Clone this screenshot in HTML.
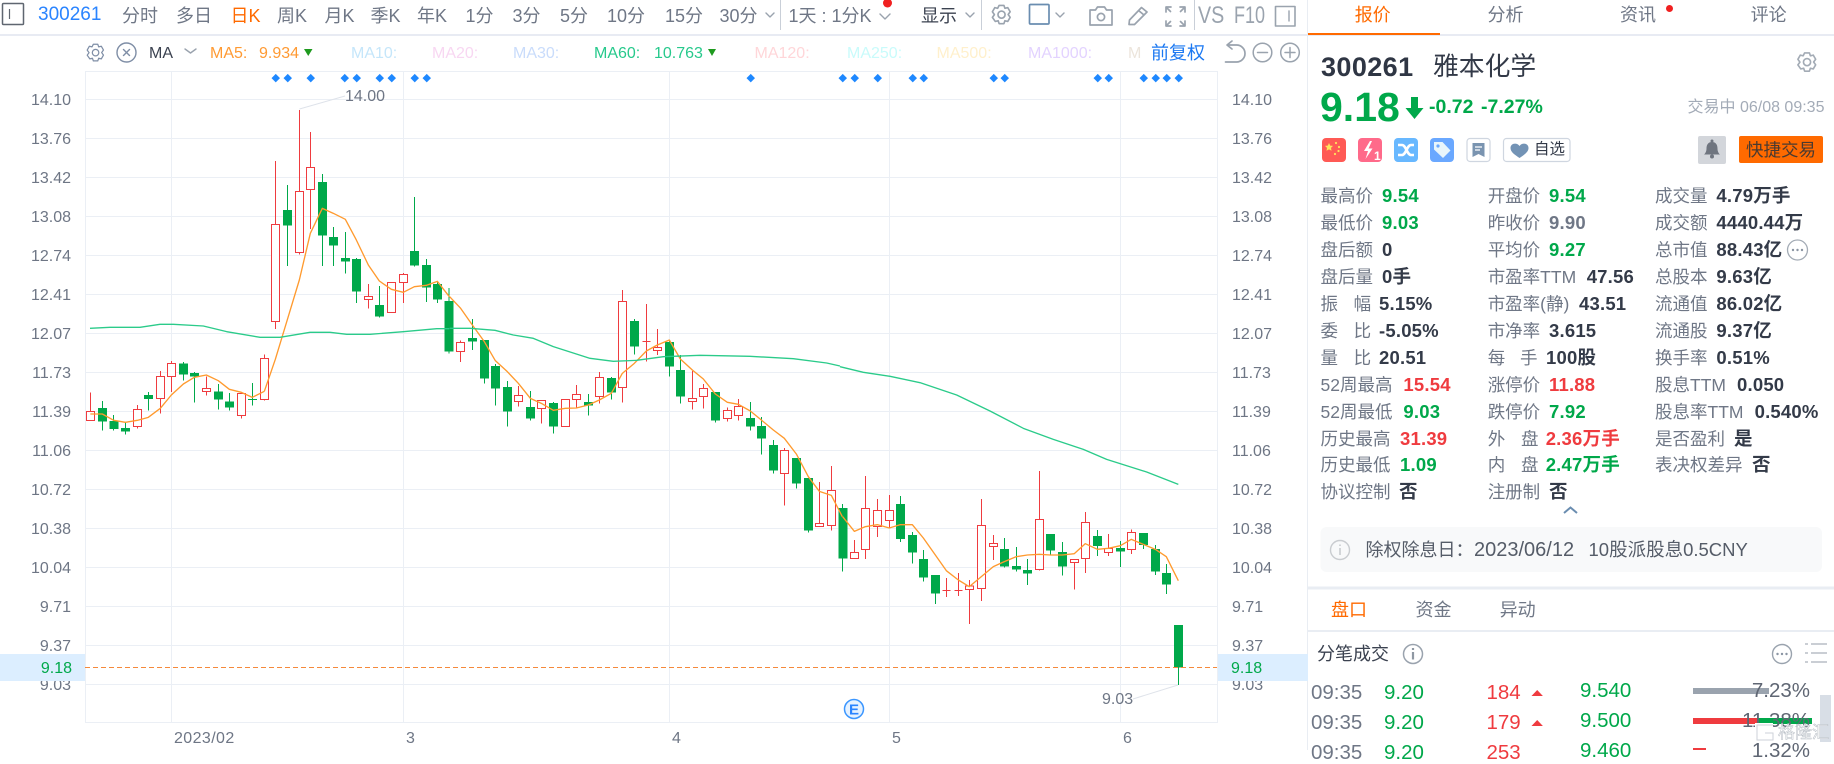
<!DOCTYPE html>
<html lang="zh"><head><meta charset="utf-8"><title>300261</title>
<style>
html,body{margin:0;padding:0;background:#fff}
body{width:1834px;height:750px;overflow:hidden;position:relative;font-family:"Liberation Sans","Noto Sans CJK SC",sans-serif;color:#6f7786}
.a{position:absolute;white-space:nowrap;line-height:20px;height:20px}
.nav{font-size:18px;top:6px;color:#6f7786}
.ma{font-size:16px;top:44px}
.yl{font-size:16px;color:#6e7685;width:71px;left:0;text-align:right;margin-top:1.5px}
.yr{font-size:16px;color:#6e7685;left:1232px;margin-top:1.5px}
.x{font-size:16px;color:#6e7685;top:729px}
.tab{font-size:18px;top:5px}
.r{position:absolute;left:0;width:1834px;height:20px}
.r span{position:absolute;white-space:nowrap;line-height:20px;font-size:17.5px;color:#6f7786}
.r b{position:absolute;white-space:nowrap;line-height:20px;font-size:18.5px;font-weight:700;color:#333a48;letter-spacing:.2px}
.r b.g{color:#00a84a}.r b.d{color:#ef3b3f}.r b.m{color:#6f7786}
.dm{position:absolute;top:75px;width:5.5px;height:5.5px;background:#1e88ff;transform:rotate(45deg)}
.t{font-size:20.5px}
.badge{position:absolute;top:138px;width:24px;height:24px;border-radius:4px}
svg{position:absolute;overflow:visible}
</style></head><body>

<svg style="left:0;top:0" width="1834" height="750" viewBox="0 0 1834 750">
<g shape-rendering="crispEdges" stroke="#ebeff5" stroke-width="1" fill="none">
<path d="M85 71.5H1217M85 99.5H1217M85 138.5H1217M85 177.5H1217M85 216.5H1217M85 255.5H1217M85 294.5H1217M85 333.5H1217M85 372.5H1217M85 411.5H1217M85 450.5H1217M85 489.5H1217M85 528.5H1217M85 567.5H1217M85 606.5H1217M85 645.5H1217M85 684.5H1217M85 722.5H1217"/>
<path d="M85.5 71V723M171.5 71V723M403.5 71V723M669.5 71V723M889.5 71V723M1120.5 71V723M1217.5 71V723"/>
<path stroke="#e8ebf3" stroke-width="2" d="M0 35H1834"/>
<path stroke="#e9edf3" d="M1307.5 0V750"/>
</g>
<path d="M299.5 109L345 96M1133 699L1178 685" stroke="#dfe3ea" fill="none"/>

<g transform="translate(60,340) scale(.33333)" shape-rendering="crispEdges">
<path stroke="#ef3b3f" stroke-width="3" fill="none" d="M91 158V242M232 195V266M301 93V221M334 63V156M439 110V167M544 158V236M613 43V182"/>
<path stroke="#ef3b3f" stroke-width="3" fill="#fff" d="M79 214h24v28h-24zM220 208h24v52h-24zM289 109h24v67h-24zM322 70h24v40h-24zM427 145h24v10h-24zM532 160h24v67h-24zM601 55h24v124h-24z"/>
<path stroke="#00a84a" stroke-width="3" fill="none" d="M127 183V272M161 225V272M196 248V284M265 156V212M370 66V122M403 96V188M475 132V209M508 159V212M577 129V197"/>
<path fill="#00a84a" d="M114 204h27v41h-27zM148 243h27v24h-27zM183 264h27v11h-27zM252 165h27v12h-27zM357 70h27v34h-27zM390 99h27v11h-27zM462 154h27v25h-27zM495 184h27v19h-27zM564 177h27v3h-27z"/>
</g>
<g transform="translate(60,90) scale(.33333)" shape-rendering="crispEdges">
<path stroke="#ef3b3f" stroke-width="3" fill="none" d="M646 213V717M718 60V494M751 126V417M925 582V656M994 577V667M1030 549V639"/>
<path stroke="#ef3b3f" stroke-width="3" fill="#fff" d="M634 403h24v291h-24zM706 304h24v184h-24zM739 232h24v66h-24zM913 619h24v9h-24zM982 577h24v90h-24zM1018 553h24v24h-24z"/>
<path stroke="#00a84a" stroke-width="3" fill="none" d="M682 285V528M787 252V528M820 411V528M856 426V551M889 504V639M958 588V683M1063 321V530M1099 507V636M1132 573V639"/>
<path fill="#00a84a" d="M669 360h27v47h-27zM774 276h27v161h-27zM807 441h27v26h-27zM843 504h27v11h-27zM876 507h27v98h-27zM945 645h27v35h-27zM1050 483h27v44h-27zM1086 525h27v68h-27zM1119 582h27v47h-27z"/>
</g>
<g transform="translate(450,270) scale(.33333)" shape-rendering="crispEdges">
<path stroke="#ef3b3f" stroke-width="3" fill="none" d="M31 211V276M205 348V410M274 391V461M346 388V469M379 345V414M448 306V401M517 60V398M589 102V275M622 177V255M727 303V419M760 342V416M832 412V455M865 387V452M1003 534V707M1108 636V769M1144 588V782M577 214H602"/>
<path stroke="#ef3b3f" stroke-width="3" fill="#fff" d="M19 217h24v28h-24zM193 376h24v19h-24zM262 391h24v24h-24zM334 388h24v81h-24zM367 373h24v15h-24zM436 322h24v57h-24zM505 94h24v258h-24zM610 232h24v9h-24zM715 385h24v9h-24zM748 355h24v24h-24zM820 421h24v24h-24zM853 409h24v27h-24zM991 541h24v69h-24zM1096 760h24v9h-24zM1132 661h24v105h-24z"/>
<path stroke="#00a84a" stroke-width="3" fill="none" d="M-3 54V251M67 147V240M103 210V341M136 282V407M172 333V470M241 363V452M310 396V491M415 372V437M484 321V389M553 147V254M658 210V320M691 255V401M796 366V458M901 396V482M934 441V554M970 510V611M1039 564V656M1075 624V788"/>
<path fill="#00a84a" d="M-16 93h27v152h-27zM54 204h27v11h-27zM90 210h27v116h-27zM123 288h27v68h-27zM159 351h27v74h-27zM228 411h27v35h-27zM297 399h27v71h-27zM402 396h27v11h-27zM471 324h27v44h-27zM540 153h27v77h-27zM645 216h27v74h-27zM678 300h27v80h-27zM783 366h27v86h-27zM888 444h27v26h-27zM921 468h27v38h-27zM957 525h27v77h-27zM1026 564h27v77h-27zM1062 624h27v158h-27z"/>
</g>
<g transform="translate(840,450) scale(.33333)" shape-rendering="crispEdges">
<path stroke="#ef3b3f" stroke-width="3" fill="none" d="M43 270V325M76 78V327M112 147V261M148 135V232M388 390V522M424 147V453M460 255V330M598 63V362M703 328V419M736 186V369M805 252V318M874 238V312M319 384V441M355 369V438M307 422H332M343 422H368"/>
<path stroke="#ef3b3f" stroke-width="3" fill="#fff" d="M31 307h24v18h-24zM64 175h24v123h-24zM100 181h24v48h-24zM136 181h24v30h-24zM376 408h24v10h-24zM412 226h24v189h-24zM448 280h24v9h-24zM586 208h24v150h-24zM691 328h24v10h-24zM724 217h24v108h-24zM793 295h24v12h-24zM862 247h24v51h-24z"/>
<path stroke="#00a84a" stroke-width="3" fill="none" d="M8 162V365M181 138V276M217 246V341M250 300V395M286 375V462M493 264V353M529 291V365M562 327V405M631 252V315M667 276V377M772 240V318M841 273V351M910 249V297M946 285V375M979 342V432M1015 525V705"/>
<path fill="#00a84a" d="M-5 174h27v152h-27zM168 162h27v105h-27zM204 255h27v53h-27zM237 327h27v56h-27zM273 375h27v56h-27zM480 297h27v53h-27zM516 348h27v11h-27zM549 360h27v11h-27zM618 252h27v50h-27zM654 306h27v44h-27zM759 258h27v30h-27zM828 294h27v11h-27zM897 249h27v36h-27zM933 297h27v68h-27zM966 369h27v35h-27zM1002 525h27v127h-27z"/>
</g>

<g fill="none" stroke-width="4" stroke-linejoin="round" stroke="#ff9a2e">
<polyline transform="translate(60,340) scale(.33333)" points="91,222 127,222 161,241 196,247 232,241 265,232 301,205 334,165 370,132 403,112 439,105 475,122 508,148 544,157 577,172 613,154"/>
<polyline transform="translate(60,90) scale(.33333)" points="613,904 646,808 682,689 718,570 751,430 787,355 820,370 856,388 889,450 925,525 958,573 994,598 1030,607 1063,590 1099,586 1132,574 1168,620"/>
<polyline transform="translate(450,270) scale(.33333)" points="-1,80 32,115 67,165 103,215 136,272 172,305 205,340 241,385 274,400 310,421 346,415 379,414 415,405 448,390 484,370 517,310 553,280 589,243 622,225 658,210 691,267 727,300 760,327 796,372 832,397 865,403 901,423 934,450 970,480 1003,505 1039,552 1075,620 1108,664 1144,676 1177,740"/>
<polyline transform="translate(840,450) scale(.33333)" points="8,200 43,244 76,230 112,224 148,234 181,224 217,224 250,264 286,315 319,362 355,390 388,410 424,380 460,350 493,335 529,320 562,315 598,313 631,315 667,315 703,311 736,281 772,298 805,295 841,287 874,268 910,283 946,298 979,320 1015,392"/>
</g>
<g fill="none" stroke-width="4" stroke-linejoin="round" stroke="#2bcb8a">
<polyline transform="translate(60,90) scale(.33333)" points="90,715 150,712 240,712 300,703 340,703 430,708 500,725 600,742 660,742 750,727 810,727 860,733 930,733 1030,725 1130,716 1168,716"/>
<polyline transform="translate(450,270) scale(.33333)" points="-1,175 60,175 135,181 190,195 250,205 310,230 420,265 490,274 560,271 640,260 750,256 900,259 1030,266 1130,279 1170,288"/>
<polyline transform="translate(840,360) scale(.33333)" points="0,20 70,37 150,49 240,68 350,105 450,153 550,205 640,238 730,268 800,298 920,336 1015,373"/>
</g>
<path d="M85 667.5H1217" stroke="#f5893b" stroke-width="1" stroke-dasharray="5 3" fill="none" shape-rendering="crispEdges"/>

<!-- toolbar icons -->
<rect x="2.5" y="3.5" width="21" height="21" fill="none" stroke="#5f6670" stroke-width="1.5" rx="1"/><path d="M9.5 9v10" stroke="#5f6670" stroke-width="1.2"/>
<g fill="none" stroke="#9aa3ae" stroke-width="1.4" stroke-linecap="round" stroke-linejoin="round">
<path d="M766 13l4 4 4-4M880 14l5 5 5-5M966 13l4 4 4-4M1056 13l4 4 4-4M185 49l5.500 4 5.500-4"/>
<g transform="translate(990,3) scale(.96)"><path stroke-width="1.7" d="M9.500 2.500h5l1 3 3-.7 2.500 4.300-2.100 2.900 2.100 2.900-2.500 4.300-3-.7-1 3h-5l-1-3-3 .7L2.500 15l2.100-2.900L2.500 9.200 5 4.800l3 .7z"/><circle cx="12" cy="12.100" r="3.700" stroke-width="1.700"/></g>
<rect x="1029.500" y="4.500" width="19.500" height="19.500" rx="1" stroke="#6a8db0" stroke-width="1.700"/>
<path stroke-width="1.700" d="M1090 10h5.500l2-3h7l2 3h5.500v15h-22z"/><circle cx="1101" cy="17" r="3.600" stroke-width="1.700"/>
<path stroke-width="1.700" d="M1129.500 20l12-12.500 5.500 4.500-12.500 12.500-5.500 0zM1138.500 10.500l5.500 4.500"/>
<path stroke-width="1.700" d="M1166 12V7h5M1180 7h5v5M1185 21v5h-5M1171 26h-5v-5M1166.500 7.500l4 4M1184.500 7.500l-4 4M1184.500 25.500l-4-4M1166.500 25.500l4-4"/>
<rect x="1275.500" y="6.500" width="19.500" height="19.500" stroke-width="1.600"/><path d="M1289 11v10"/>
<path stroke="#c9cfd8" stroke-linecap="butt" stroke-width="1" d="M780.500 0v30M981.500 0v30M1194.500 0v30"/>
<!-- ma row -->
<g transform="translate(85,42) scale(.88)"><path stroke="#7f8ea6" d="M9.500 2.500h5l1 3 3-.7 2.500 4.300-2.100 2.900 2.100 2.900-2.500 4.300-3-.7-1 3h-5l-1-3-3 .7L2.500 15l2.100-2.900L2.500 9.200 5 4.800l3 .7z"/><circle cx="12" cy="12.100" r="3.700" stroke="#7f8ea6"/></g>
<circle cx="126.500" cy="52.500" r="9.500" stroke="#7f8ea6"/><path stroke="#7f8ea6" d="M123.500 49.500l6 6M129.500 49.500l-6 6"/>
<path stroke="#9aa3ae" stroke-width="1.700" d="M1228 45h8.500a8.500 8.500 0 0 1 0 17h-11M1232 41l-5 4 5 4"/>
<circle cx="1262.500" cy="52.500" r="9.300" stroke-width="1.500"/><path stroke-width="1.500" d="M1257.500 52.500h10"/>
<circle cx="1290" cy="52.500" r="9.300" stroke-width="1.500"/><path stroke-width="1.500" d="M1285 52.500h10M1290 47.500v10"/>
</g>
<path d="M304 49h8.500l-4.250 7z" fill="#1e9a1e"/><path d="M708 49h8l-4 7z" fill="#1e9a1e"/>
<circle cx="887.500" cy="3" r="4.500" fill="#f02020"/>

<circle cx="854" cy="709" r="9.500" fill="#e6f2ff" stroke="#3b96ff" stroke-width="1.500"/>
<text x="854" y="714.500" fill="#2a84ff" font-size="15" text-anchor="middle" font-family="Liberation Sans" font-weight="bold">E</text>
</svg>

<div class="a" style="left:38px;top:5px;font-size:19px;color:#2a84ff">300261</div>
<div class="a nav" style="left:122px">分时</div><div class="a nav" style="left:176px">多日</div>
<div class="a nav" style="left:230.500px;color:#ff6a00">日K</div><div class="a nav" style="left:277px">周K</div>
<div class="a nav" style="left:324.500px">月K</div><div class="a nav" style="left:370.500px">季K</div>
<div class="a nav" style="left:417px">年K</div><div class="a nav" style="left:465.500px">1分</div>
<div class="a nav" style="left:512.500px">3分</div><div class="a nav" style="left:560px">5分</div>
<div class="a nav" style="left:607px">10分</div><div class="a nav" style="left:665px">15分</div>
<div class="a nav" style="left:719.500px">30分</div><div class="a nav" style="left:788.500px">1天 : 1分K</div>
<div class="a nav" style="left:921px;color:#3b4250">显示</div>
<div class="a" style="left:1198px;top:6px;font-size:24px;color:#9aa3ae;transform:scaleX(.82);transform-origin:0 50%">VS</div>
<div class="a" style="left:1234px;top:6px;font-size:24px;color:#9aa3ae;transform:scaleX(.75);transform-origin:0 50%">F10</div>

<div class="a ma" style="left:149px;color:#3b4250">MA</div>
<div class="a ma" style="left:210px;color:#ff9a33">MA5:</div><div class="a ma" style="left:259px;color:#ff9a33">9.934</div>
<div class="a ma" style="left:351px;color:#c5e6fa">MA10:</div><div class="a ma" style="left:432px;color:#f8d7f2">MA20:</div>
<div class="a ma" style="left:513px;color:#c9dcfb">MA30:</div>
<div class="a ma" style="left:594px;color:#27c98c">MA60:</div><div class="a ma" style="left:654px;color:#27c98c">10.763</div>
<div class="a ma" style="left:754.500px;color:#ffd6d9">MA120:</div><div class="a ma" style="left:847px;color:#c9fbfb">MA250:</div>
<div class="a ma" style="left:936.500px;color:#fff0cc">MA500:</div><div class="a ma" style="left:1028px;color:#e3d3ff">MA1000:</div>
<div class="a ma" style="left:1128px;color:#ece5dc">M</div>
<div class="a" style="left:1151px;top:43px;font-size:18px;color:#1b78f2">前复权</div>

<i class="dm" style="left:273px"></i><i class="dm" style="left:284.500px"></i><i class="dm" style="left:307.500px"></i><i class="dm" style="left:342px"></i><i class="dm" style="left:353.500px"></i><i class="dm" style="left:377px"></i><i class="dm" style="left:389px"></i><i class="dm" style="left:411.500px"></i><i class="dm" style="left:423.500px"></i><i class="dm" style="left:747.500px"></i><i class="dm" style="left:839.500px"></i><i class="dm" style="left:851.500px"></i><i class="dm" style="left:875px"></i><i class="dm" style="left:909.500px"></i><i class="dm" style="left:920.500px"></i><i class="dm" style="left:990.500px"></i><i class="dm" style="left:1001.500px"></i><i class="dm" style="left:1094.500px"></i><i class="dm" style="left:1105.500px"></i><i class="dm" style="left:1140.500px"></i><i class="dm" style="left:1152.500px"></i><i class="dm" style="left:1164px"></i><i class="dm" style="left:1175.500px"></i>

<div class="a" style="left:345px;top:86.500px;font-size:16px;color:#6e7685">14.00</div>
<div class="a" style="left:1102px;top:690px;font-size:16px;color:#6e7685">9.03</div>

<div class="a yl" style="top:89px">14.10</div><div class="a yl" style="top:128px">13.76</div><div class="a yl" style="top:167px">13.42</div><div class="a yl" style="top:206px">13.08</div><div class="a yl" style="top:245px">12.74</div><div class="a yl" style="top:284px">12.41</div><div class="a yl" style="top:323px">12.07</div><div class="a yl" style="top:362px">11.73</div><div class="a yl" style="top:401px">11.39</div><div class="a yl" style="top:440px">11.06</div><div class="a yl" style="top:479px">10.72</div><div class="a yl" style="top:518px">10.38</div><div class="a yl" style="top:557px">10.04</div><div class="a yl" style="top:596px">9.71</div><div class="a yl" style="top:635px">9.37</div><div class="a yl" style="top:674px">9.03</div>
<div class="a yr" style="top:89px">14.10</div><div class="a yr" style="top:128px">13.76</div><div class="a yr" style="top:167px">13.42</div><div class="a yr" style="top:206px">13.08</div><div class="a yr" style="top:245px">12.74</div><div class="a yr" style="top:284px">12.41</div><div class="a yr" style="top:323px">12.07</div><div class="a yr" style="top:362px">11.73</div><div class="a yr" style="top:401px">11.39</div><div class="a yr" style="top:440px">11.06</div><div class="a yr" style="top:479px">10.72</div><div class="a yr" style="top:518px">10.38</div><div class="a yr" style="top:557px">10.04</div><div class="a yr" style="top:596px">9.71</div><div class="a yr" style="top:635px">9.37</div><div class="a yr" style="top:674px">9.03</div>

<div style="position:absolute;left:0;top:654px;width:85px;height:27px;background:#dceeff"></div>
<div style="position:absolute;left:1218px;top:654px;width:90px;height:27px;background:#dceeff"></div>
<div class="a" style="left:0;width:72px;text-align:right;top:658.500px;font-size:16px;color:#00a84a">9.18</div>
<div class="a" style="left:1231px;top:658.500px;font-size:16px;color:#00a84a">9.18</div>

<div class="a x" style="left:174px;letter-spacing:.4px">2023/02</div><div class="a x" style="left:406px">3</div><div class="a x" style="left:672px">4</div><div class="a x" style="left:892px">5</div><div class="a x" style="left:1123px">6</div>

<!-- right panel -->
<div style="position:absolute;left:1308px;top:33px;width:132px;height:2px;background:#ff6a00"></div>
<div class="a tab" style="left:1354.700px;color:#ff6a00">报价</div><div class="a tab" style="left:1487.500px">分析</div><div class="a tab" style="left:1620px">资讯</div><div class="a tab" style="left:1750.600px">评论</div>
<div style="position:absolute;left:1665.500px;top:5px;width:7px;height:7px;border-radius:50%;background:#f02020"></div>

<div class="a" style="left:1321px;top:52px;height:30px;line-height:30px;font-size:27px;font-weight:700;color:#2f3644;letter-spacing:.4px">300261</div>
<div class="a" style="left:1433px;top:52px;height:30px;line-height:30px;font-size:25.800px;color:#333a48">雅本化学</div>
<div class="a" style="left:1320px;top:84px;height:46px;line-height:46px;font-size:41px;font-weight:700;color:#00a84a">9.18</div>
<div class="a" style="left:1429px;top:97px;font-size:19.500px;font-weight:700;color:#00a84a">-0.72</div>
<div class="a" style="left:1481px;top:97px;font-size:19.500px;font-weight:700;color:#00a84a">-7.27%</div>
<div class="a" style="left:1687.500px;top:98px;font-size:16px;color:#a3abb7">交易中 06/08 09:35</div>

<svg style="left:0;top:0" width="1834" height="750" viewBox="0 0 1834 750">
<g fill="none" stroke="#a3abb5" stroke-width="1.700" stroke-linejoin="round" transform="translate(1795.500,50.500) scale(.96)"><path d="M9.500 2.500h5l1 3 3-.7 2.500 4.300-2.100 2.900 2.100 2.900-2.500 4.300-3-.7-1 3h-5l-1-3-3 .7L2.500 15l2.100-2.900L2.500 9.200 5 4.800l3 .7z"/><circle cx="12" cy="12.100" r="3.700"/></g>
<path d="M1411 97h7v11h5.500l-9 11-9-11h5.500z" fill="#00a84a"/>

<rect x="1322" y="138" width="24" height="24" rx="4" fill="#ff5a55"/>
<path d="M1329 143l1.200 2.600 2.800.3-2 2 .5 2.800-2.500-1.300-2.500 1.300.5-2.800-2-2 2.800-.3z" fill="#ffe45c"/>
<g fill="#ffe45c"><circle cx="1336" cy="143" r="1.100"/><circle cx="1339" cy="147" r="1.100"/><circle cx="1338.500" cy="151" r="1.100"/><circle cx="1335" cy="154" r="1.100"/></g>
<rect x="1358" y="138" width="24" height="24" rx="4" fill="#ff6a8a"/>
<path d="M1370 141l-6 10h4l-2.500 8 7-10.500h-4l3.500-7.500z" fill="#fff"/>
<text x="1374" y="160" font-size="12" font-weight="700" fill="#fff" font-family="Liberation Sans">1</text>
<rect x="1394" y="138" width="24" height="24" rx="4" fill="#68b8ff"/>
<path d="M1398 145h4c4 0 5 10 9 10h3M1398 155h4c4 0 5-10 9-10h3" fill="none" stroke="#fff" stroke-width="2.600"/>
<rect x="1430" y="138" width="24" height="24" rx="4" fill="#6aa8ff"/>
<path d="M1434 142h8.500l8 8.500-7.500 7.500-9-8.500z" fill="#e8f5fb"/><circle cx="1438" cy="146" r="1.600" fill="#6aa8ff"/>
<rect x="1467" y="138.500" width="23" height="23" rx="3" fill="#fff" stroke="#cfd6e0" stroke-width="1.200"/>
<path d="M1472.500 143h12v14l-6-3-6 3z" fill="#7a94b0"/><path d="M1475 147h7M1475 150h5" stroke="#fff" stroke-width="1.200"/>
<rect x="1503.500" y="138.500" width="66.500" height="23" rx="3" fill="#fff" stroke="#cfd6e0" stroke-width="1.200"/>
<path d="M1519.500 158c-5-3.500-9-6-9-10 0-4.500 6-6 9-2 3-4 9-2.500 9 2 0 4-4 6.500-9 10z" fill="#7393b5"/>
<rect x="1698" y="136" width="28" height="28" rx="2" fill="#d3d6db"/>
<path d="M1712 142c4 0 5.500 3 5.500 6.500 0 3 1.300 5 2.500 6h-16c1.200-1 2.500-3 2.500-6 0-3.500 1.500-6.500 5.500-6.500z" fill="#6f757f"/><circle cx="1712" cy="156.500" r="2" fill="#6f757f"/><circle cx="1712" cy="141" r="1.500" fill="#6f757f"/>
<rect x="1739" y="136" width="84" height="27" rx="2" fill="#ff6a00"/>

<circle cx="1797.500" cy="250" r="10" fill="none" stroke="#a3abb5" stroke-width="1.300"/>
<g fill="#8b95a3"><circle cx="1793" cy="250" r="1.200"/><circle cx="1797.500" cy="250" r="1.200"/><circle cx="1802" cy="250" r="1.200"/></g>
<path d="M1564 513l6.500-5.500 6.500 5.500" fill="none" stroke="#6a8db0" stroke-width="2"/>
<rect x="1320.500" y="527" width="501.500" height="45" rx="6" fill="#f8f9fa"/>
<circle cx="1340" cy="550" r="9.500" fill="none" stroke="#c9ccd0" stroke-width="1.400"/><path d="M1340 548v7M1340 544.500v1.500" stroke="#c9ccd0" stroke-width="1.600"/>
<path d="M1308 588H1834" stroke="#e9edf3" stroke-width="3"/>
<path d="M1308 631H1834" stroke="#e9edf3" stroke-width="2"/>
<circle cx="1413" cy="654" r="9.500" fill="none" stroke="#9aa3ae" stroke-width="1.500"/><path d="M1413 652v7.500M1413 648v2" stroke="#8f98a3" stroke-width="2.200"/>
<circle cx="1782" cy="654" r="9.500" fill="none" stroke="#9aa3ae" stroke-width="1.400"/>
<g fill="#8b95a3"><circle cx="1777.500" cy="654" r="1.200"/><circle cx="1782" cy="654" r="1.200"/><circle cx="1786.500" cy="654" r="1.200"/></g>
<path d="M1805 644h3M1811 644h16M1805 653h3M1811 653h16M1805 662h3M1811 662h16" stroke="#aab1bb" stroke-width="1.300"/>
<path d="M1531.500 696l5.700-6 5.700 6zM1531.500 726l5.700-6 5.700 6z" fill="#ef3b3f"/>
<rect x="1693" y="688" width="76" height="6" fill="#9aa3ae"/>
<rect x="1693" y="718" width="64" height="6" fill="#ef3b3f"/><rect x="1757" y="718" width="55" height="6" fill="#00a84a"/>
<rect x="1693" y="748" width="13" height="2" fill="#ef3b3f"/>
</svg>

<div class="a" style="left:1534px;top:140px;font-size:15.500px;color:#333a48">自选</div>
<div class="a" style="left:1746px;top:140px;font-size:17.500px;color:#4a3a30">快捷交易</div>

<div class="r" style="top:186px"><span style="left:1320.500px">最高价</span><b class="g" style="left:1382px">9.54</b><span style="left:1487.700px">开盘价</span><b class="g" style="left:1549px">9.54</b><span style="left:1655px">成交量</span><b style="left:1716.400px">4.79万手</b></div>
<div class="r" style="top:213px"><span style="left:1320.500px">最低价</span><b class="g" style="left:1382px">9.03</b><span style="left:1487.700px">昨收价</span><b class="m" style="left:1549px">9.90</b><span style="left:1655px">成交额</span><b style="left:1716.400px">4440.44万</b></div>
<div class="r" style="top:240px"><span style="left:1320.500px">盘后额</span><b style="left:1382px">0</b><span style="left:1487.700px">平均价</span><b class="g" style="left:1549px">9.27</b><span style="left:1655px">总市值</span><b style="left:1716.400px">88.43亿</b></div>
<div class="r" style="top:267px"><span style="left:1320.500px">盘后量</span><b style="left:1382px">0手</b><span style="left:1487.700px">市盈率TTM</span><b style="left:1586.700px">47.56</b><span style="left:1655px">总股本</span><b style="left:1716.400px">9.63亿</b></div>
<div class="r" style="top:294px"><span style="left:1320.500px">振</span><span style="left:1353.600px">幅</span><b style="left:1379px">5.15%</b><span style="left:1487.700px">市盈率(静)</span><b style="left:1579px">43.51</b><span style="left:1655px">流通值</span><b style="left:1716.400px">86.02亿</b></div>
<div class="r" style="top:321px"><span style="left:1320.500px">委</span><span style="left:1353.600px">比</span><b style="left:1379px">-5.05%</b><span style="left:1487.700px">市净率</span><b style="left:1549px">3.615</b><span style="left:1655px">流通股</span><b style="left:1716.400px">9.37亿</b></div>
<div class="r" style="top:348px"><span style="left:1320.500px">量</span><span style="left:1353.600px">比</span><b style="left:1379px">20.51</b><span style="left:1487.700px">每</span><span style="left:1520px">手</span><b style="left:1546px">100股</b><span style="left:1655px">换手率</span><b style="left:1716.400px">0.51%</b></div>
<div class="r" style="top:375px"><span style="left:1320.500px">52周最高</span><b class="d" style="left:1403.400px">15.54</b><span style="left:1487.700px">涨停价</span><b class="d" style="left:1549px">11.88</b><span style="left:1655px">股息TTM</span><b style="left:1737px">0.050</b></div>
<div class="r" style="top:402px"><span style="left:1320.500px">52周最低</span><b class="g" style="left:1403.400px">9.03</b><span style="left:1487.700px">跌停价</span><b class="g" style="left:1549px">7.92</b><span style="left:1655px">股息率TTM</span><b style="left:1754.600px">0.540%</b></div>
<div class="r" style="top:428.500px"><span style="left:1320.500px">历史最高</span><b class="d" style="left:1400px">31.39</b><span style="left:1487.700px">外</span><span style="left:1521px">盘</span><b class="d" style="left:1545.700px">2.36万手</b><span style="left:1655px">是否盈利</span><b style="left:1734px">是</b></div>
<div class="r" style="top:455px"><span style="left:1320.500px">历史最低</span><b class="g" style="left:1400px">1.09</b><span style="left:1487.700px">内</span><span style="left:1521px">盘</span><b class="g" style="left:1545.700px">2.47万手</b><span style="left:1655px">表决权差异</span><b style="left:1752px">否</b></div>
<div class="r" style="top:482px"><span style="left:1320.500px">协议控制</span><b style="left:1399px">否</b><span style="left:1487.700px">注册制</span><b style="left:1549px">否</b></div>

<div class="a" style="left:1365.500px;top:540px;font-size:18px;color:#555c68">除权除息日：</div>
<div class="a" style="left:1474px;top:540px;font-size:20px;color:#555c68">2023/06/12</div>
<div class="a" style="left:1588.500px;top:540px;font-size:18.500px;color:#555c68">10股派股息0.5CNY</div>

<div class="a" style="left:1331px;top:600px;font-size:18px;color:#ff6a00">盘口</div>
<div class="a" style="left:1415.500px;top:600px;font-size:18px">资金</div>
<div class="a" style="left:1499.700px;top:600px;font-size:18px">异动</div>
<div class="a" style="left:1317px;top:644px;font-size:18px;color:#3b4250">分笔成交</div>

<div class="a t" style="left:1311px;top:682.500px">09:35</div><div class="a t" style="left:1384px;top:682.500px;color:#00a84a">9.20</div><div class="a t" style="left:1486.500px;top:682.500px;color:#ef3b3f">184</div><div class="a t" style="left:1580px;top:680.500px;color:#00a84a">9.540</div><div class="a t" style="right:24px;top:680.500px;color:#5f6673">7.23%</div>
<div class="a t" style="left:1311px;top:712.500px">09:35</div><div class="a t" style="left:1384px;top:712.500px;color:#00a84a">9.20</div><div class="a t" style="left:1486.500px;top:712.500px;color:#ef3b3f">179</div><div class="a t" style="left:1580px;top:710.500px;color:#00a84a">9.500</div><div class="a t" style="right:24px;top:710.500px;color:#5f6673">11.38%</div>
<div class="a t" style="left:1311px;top:742.500px">09:35</div><div class="a t" style="left:1384px;top:742.500px;color:#00a84a">9.20</div><div class="a t" style="left:1486.500px;top:742.500px;color:#ef3b3f">253</div><div class="a t" style="left:1580px;top:740.500px;color:#00a84a">9.460</div><div class="a t" style="right:24px;top:740.500px;color:#5f6673">1.32%</div>

<div style="position:absolute;left:1820px;top:695px;width:11px;height:47px;background:#d8dee6"></div>
<svg style="left:1754px;top:722px" width="22" height="21" viewBox="0 0 22 21"><path d="M19 3H3v15h16v-7h-8" fill="none" stroke="#fff" stroke-width="4"/><path d="M19 3H3v15h16v-7h-8" fill="none" stroke="#b9bfc7" stroke-width="1" opacity=".7"/></svg>
<div class="a" style="left:1778px;top:723px;font-size:17px;color:rgba(255,255,255,.85);-webkit-text-stroke:.5px #b5bbc3">格隆汇</div>
</body></html>
